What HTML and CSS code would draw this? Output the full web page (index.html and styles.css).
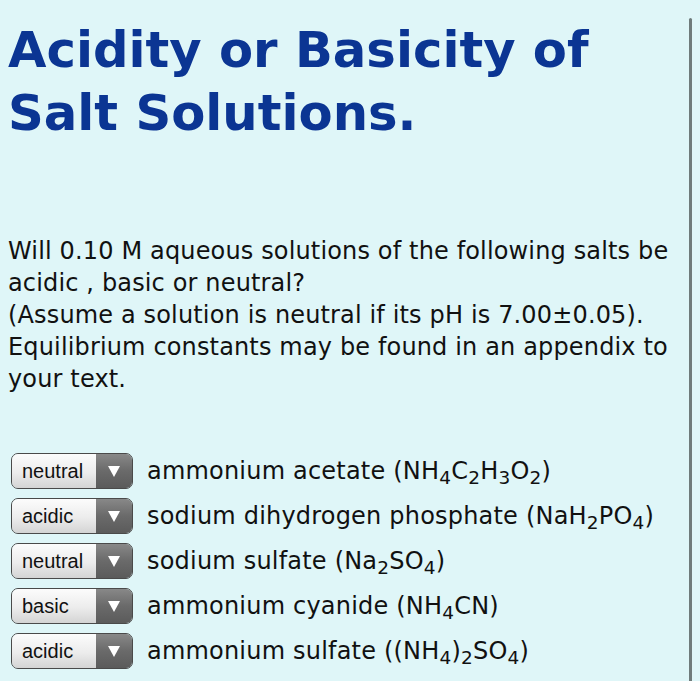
FILE: index.html
```html
<!DOCTYPE html>
<html lang="en">

<head>
    <meta charset="UTF-8">
    <title>Acidity or Basicity of Salt Solutions</title>
    <link rel="stylesheet" href="styles.css">
</head>

<body>
    <div class="side"></div>
    <main class="opgave">
        <h1>Acidity or Basicity of Salt Solutions.</h1>

        <p class="tekst">Will 0.10 M aqueous solutions of the following salts be acidic , basic or neutral?<br>
            (Assume a solution is neutral if its pH is 7.00&plusmn;0.05).<br>
            Equilibrium constants may be found in an appendix to your text.</p>

        <section class="svar">
            <div class="raekke">
                <div class="vaelg"><span class="valg">neutral</span><span class="pil"></span></div>
                <span class="salt">ammonium acetate (NH<sub>4</sub>C<sub>2</sub>H<sub>3</sub>O<sub>2</sub>)</span>
            </div>
            <div class="raekke">
                <div class="vaelg"><span class="valg">acidic</span><span class="pil"></span></div>
                <span class="salt">sodium dihydrogen phosphate (NaH<sub>2</sub>PO<sub>4</sub>)</span>
            </div>
            <div class="raekke">
                <div class="vaelg"><span class="valg">neutral</span><span class="pil"></span></div>
                <span class="salt">sodium sulfate (Na<sub>2</sub>SO<sub>4</sub>)</span>
            </div>
            <div class="raekke">
                <div class="vaelg"><span class="valg">basic</span><span class="pil"></span></div>
                <span class="salt">ammonium cyanide (NH<sub>4</sub>CN)</span>
            </div>
            <div class="raekke">
                <div class="vaelg"><span class="valg">acidic</span><span class="pil"></span></div>
                <span class="salt">ammonium sulfate ((NH<sub>4</sub>)<sub>2</sub>SO<sub>4</sub>)</span>
            </div>
        </section>
    </main>
</body>

</html>
```

FILE: styles.css
```css
body {
    margin: 0;
    background-color: #dff6f8;
    font-family: "DejaVu Sans", Verdana, sans-serif;
    color: #111;
    display: flex;
    height: 681px;
    overflow: hidden;
}

.opgave {
    order: 1;
    flex: 1;
    padding: 19px 0 0 8px;
}

.side {
    order: 2;
    width: 3px;
    margin: 18px 8px 0 0;
    background-color: #6f7b7b;
    border-radius: 2px 2px 0 0;
}

h1 {
    margin: 0;
    font-size: 49.7px;
    line-height: 63px;
    font-weight: bold;
    color: #0b3593;
    width: 620px;
}

.tekst {
    margin: 90px 0 0 0;
    font-size: 24px;
    line-height: 32px;
    letter-spacing: 0.15px;
}

.svar {
    margin-top: 58px;
    display: flex;
    flex-direction: column;
    gap: 9px;
}

.raekke {
    display: flex;
    align-items: center;
    gap: 14px;
    padding-left: 3px;
}

.vaelg {
    display: flex;
    width: 120px;
    height: 34px;
    border: 1px solid #4a4a4a;
    border-radius: 7px;
    overflow: hidden;
    box-shadow: inset 0 0 0 1px rgba(0, 0, 0, 0.2);
}

.valg {
    flex: 1;
    display: flex;
    align-items: center;
    padding-left: 10px;
    font-family: "Liberation Sans", Arial, sans-serif;
    font-size: 20px;
    color: #111;
    background: linear-gradient(#fcfcfc, #ececec 55%, #d4d4d4);
}

.pil {
    width: 36px;
    display: flex;
    align-items: center;
    justify-content: center;
    background: linear-gradient(#888, #6a6a6a 50%, #5b5b5b);
}

.pil::after {
    content: "";
    border-left: 6px solid transparent;
    border-right: 6px solid transparent;
    border-top: 11px solid #fff;
}

.salt {
    font-size: 24px;
    letter-spacing: 0.2px;
}

sub {
    font-size: 18.5px;
    vertical-align: -5px;
    line-height: 0;
}
```
